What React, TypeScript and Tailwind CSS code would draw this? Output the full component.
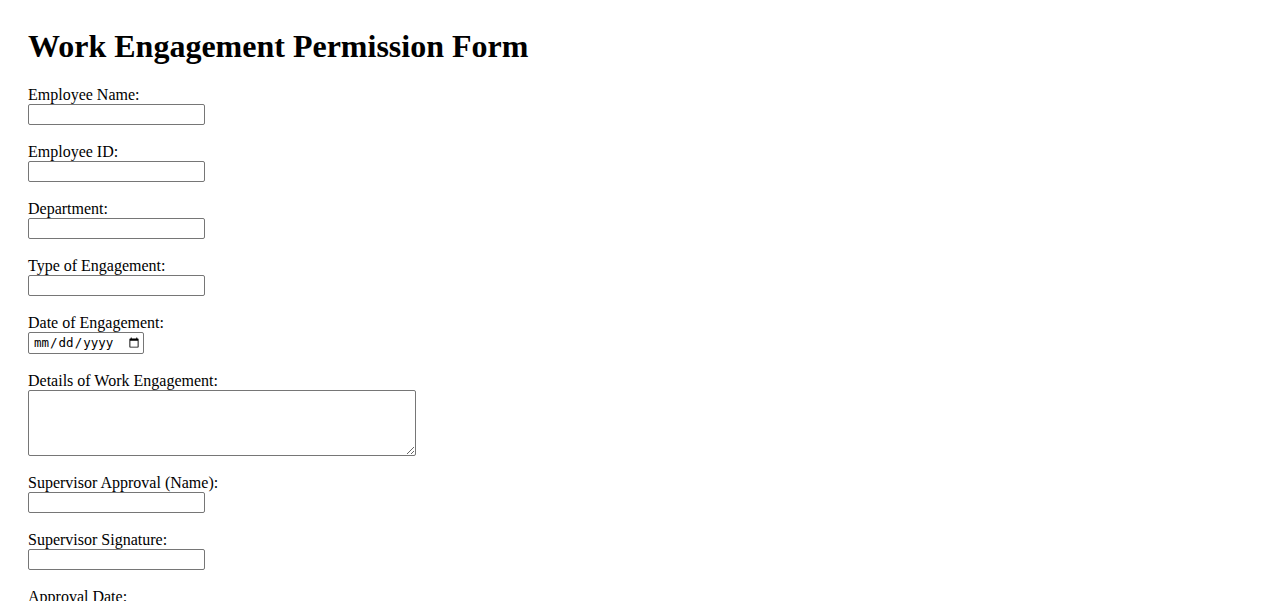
import React from "react";

type Field = {
  label: string;
  kind: "text" | "date" | "textarea";
};

const FIELDS: Field[] = [
  { label: "Employee Name:", kind: "text" },
  { label: "Employee ID:", kind: "text" },
  { label: "Department:", kind: "text" },
  { label: "Type of Engagement:", kind: "text" },
  { label: "Date of Engagement:", kind: "date" },
  { label: "Details of Work Engagement:", kind: "textarea" },
  { label: "Supervisor Approval (Name):", kind: "text" },
  { label: "Supervisor Signature:", kind: "text" },
  { label: "Approval Date:", kind: "date" },
];

const BOX = "block border border-[#767676] rounded-[2px] bg-white";

function Control({ kind }: { kind: Field["kind"] }) {
  if (kind === "textarea") {
    return <textarea className={`${BOX} w-[388px] h-[66px] resize`} />;
  }
  if (kind === "date") {
    return (
      <input
        type="date"
        className={`${BOX} w-[116px] h-[22px] pl-[4px] pr-[1px] text-[12.5px] text-black`}
        style={{ fontFamily: '"DejaVu Sans Mono", monospace' }}
      />
    );
  }
  return (
    <input
      type="text"
      className={`${BOX} w-[177px] h-[21px] px-[2px] text-[13.33px]`}
      style={{ fontFamily: '"Liberation Sans", Arial, sans-serif' }}
    />
  );
}

export default function App() {
  return (
    <div className="min-h-screen bg-white text-black font-['Liberation_Serif',_'Times_New_Roman',_serif] px-[28px] pt-[28px]">
      <h1 className="text-[32px] font-bold leading-[37px] mb-[21px]">
        Work Engagement Permission Form
      </h1>
      <form className="flex flex-col gap-[18px]">
        {FIELDS.map((f) => (
          <div key={f.label} className="flex flex-col">
            <label className="block text-[16px] leading-[18px]">{f.label}</label>
            <Control kind={f.kind} />
          </div>
        ))}
        <div>
          <button
            type="submit"
            className="border border-[#767676] rounded-[2px] bg-[#efefef] px-[6px] py-[1px] text-[13.33px]"
            style={{ fontFamily: '"Liberation Sans", Arial, sans-serif' }}
          >
            Submit
          </button>
        </div>
      </form>
    </div>
  );
}
